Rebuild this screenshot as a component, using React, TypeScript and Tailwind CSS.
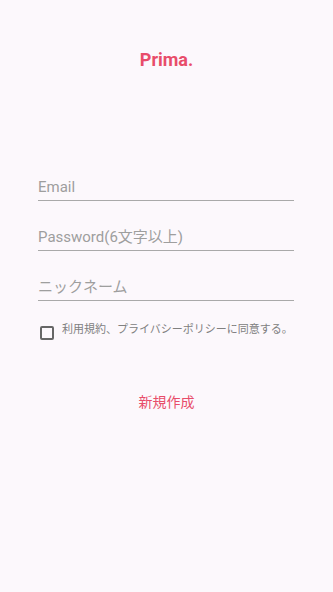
import { useState } from "react";

const font = { fontFamily: "Roboto, 'Noto Sans CJK JP', sans-serif" };

function Field({ placeholder, type = "text" }: { placeholder: string; type?: string }) {
  return (
    <div className="border-b border-[#a9a9a9] h-[50px] flex items-end">
      <input
        type={type}
        placeholder={placeholder}
        className="w-full bg-transparent outline-none text-[15px] text-[#333] placeholder:text-[#9e9e9e] pb-[3px] leading-[20px]"
        style={font}
      />
    </div>
  );
}

export default function App() {
  const [agreed, setAgreed] = useState(false);

  return (
    <div className="w-[333px] h-[592px] bg-[#fcf8fc] flex flex-col items-center" style={font}>
      {/* ロゴ */}
      <div className="pt-[48px] text-[18px] leading-[24px] font-bold text-[#e84d6a]">Prima.</div>

      {/* フォーム */}
      <div className="w-[256px] mt-[79px] ml-[-1px]">
        <Field placeholder="Email" type="email" />
        <Field placeholder="Password(6文字以上)" type="password" />
        <Field placeholder="ニックネーム" />

        <label className="flex items-start gap-[8px] mt-[22px] pl-[2px] cursor-pointer">
          <input
            type="checkbox"
            checked={agreed}
            onChange={(e) => setAgreed(e.target.checked)}
            className="appearance-none w-[14px] h-[14px] mt-[3px] border-2 border-[#666] rounded-[2px] shrink-0 checked:bg-[#e84d6a] checked:border-[#e84d6a]"
          />
          <span className="text-[11px] leading-[14px] text-[#808080] whitespace-nowrap">
            利用規約、プライバシーポリシーに同意する。
          </span>
        </label>
      </div>

      <button className="mt-[50px] text-[14px] leading-[20px] text-[#e84d6a] px-4 py-[2px]">
        新規作成
      </button>
    </div>
  );
}
